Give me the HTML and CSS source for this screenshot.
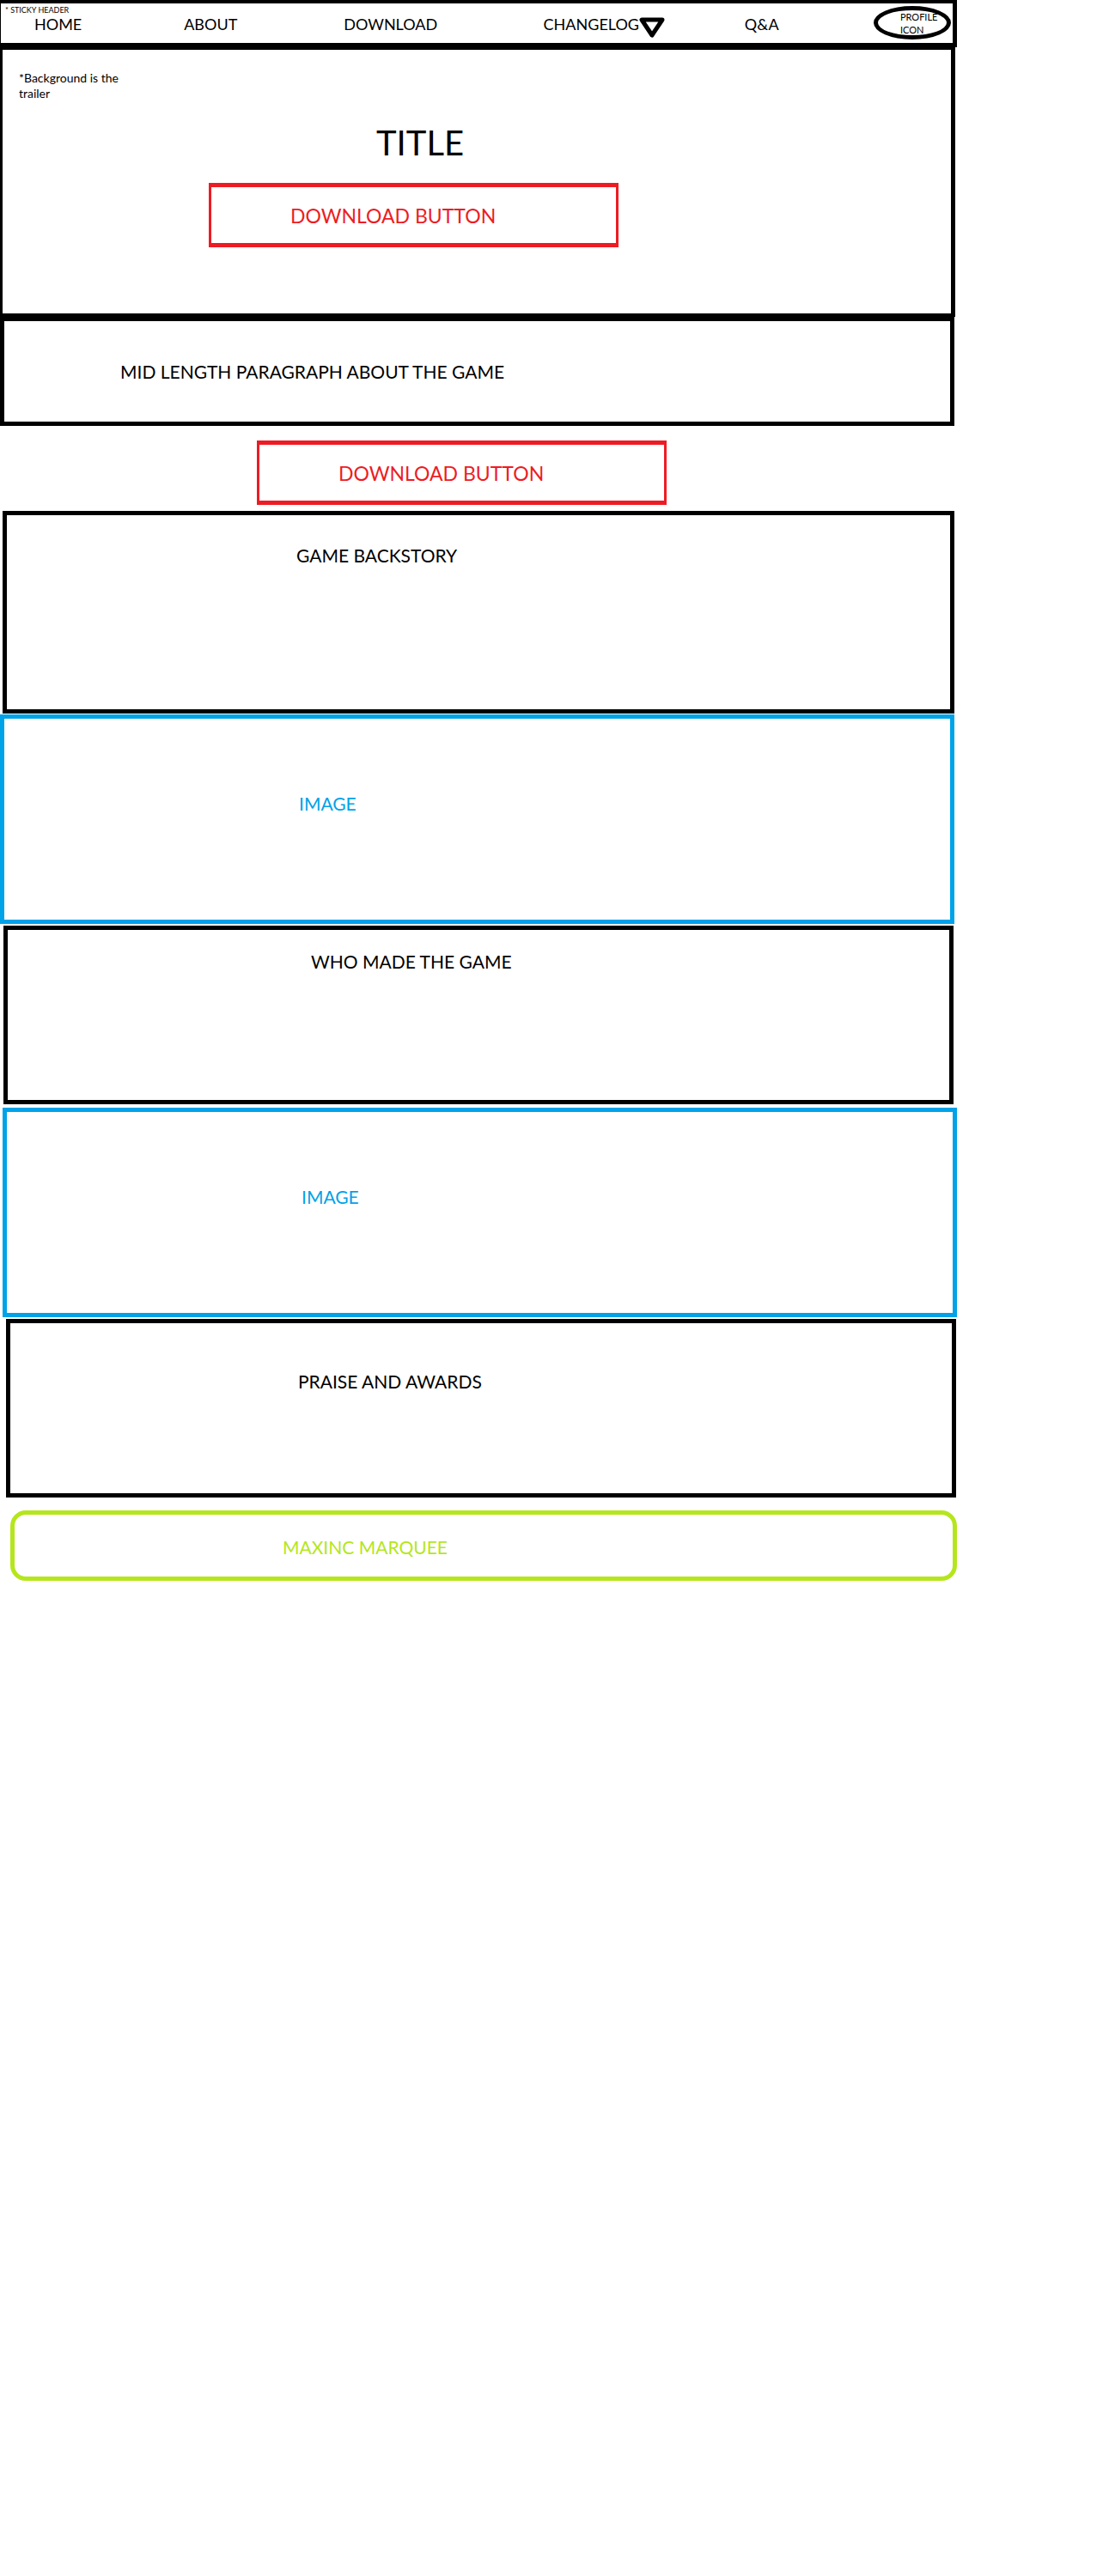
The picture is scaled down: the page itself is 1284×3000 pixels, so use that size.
FILE: index.html
```html
<!DOCTYPE html>
<html lang="en">
<head>
<meta charset="utf-8">
<meta name="viewport" content="width=device-width, initial-scale=1">
<title>Game landing page</title>
<link rel="stylesheet" href="styles.css">
</head>
<body>
<div class="page">
  <header class="header">
    <span class="header-note">* STICKY HEADER</span>
    <nav class="nav">
      <a href="#home">HOME</a>
      <a href="#about">ABOUT</a>
      <a href="#download">DOWNLOAD</a>
      <a class="has-menu" href="#changelog">CHANGELOG<svg class="caret" width="30" height="24" viewBox="0 0 30 24" aria-hidden="true"><path d="M3 3H27L15 21Z" fill="none" stroke="currentColor" stroke-width="5" stroke-linejoin="round"/></svg></a>
      <a href="#qa">Q&amp;A</a>
      <a class="profile" href="#profile">PROFILE ICON</a>
    </nav>
  </header>
  <main>
    <section class="hero" id="home">
      <p class="hero-note">*Background is the trailer</p>
      <h1 class="title">TITLE</h1>
      <button class="download" type="button">DOWNLOAD BUTTON</button>
    </section>
    <section class="box intro" id="about">
      <p class="label">MID LENGTH PARAGRAPH ABOUT THE GAME</p>
    </section>
    <div class="download-row" id="download">
      <button class="download" type="button">DOWNLOAD BUTTON</button>
    </div>
    <section class="box backstory"><h2 class="label">GAME BACKSTORY</h2></section>
    <section class="box image"><p class="label">IMAGE</p></section>
    <section class="box makers"><h2 class="label">WHO MADE THE GAME</h2></section>
    <section class="box image image-second"><p class="label">IMAGE</p></section>
    <section class="box praise"><h2 class="label">PRAISE AND AWARDS</h2></section>
  </main>
  <footer class="box marquee"><p class="label">MAXINC MARQUEE</p></footer>
</div>
</body>
</html>
```
FILE: styles.css
```css
* {
  box-sizing: border-box;
}

body {
  margin: 0;
  background: #fff;
  color: #000;
  font-family: Lato, "Liberation Sans", sans-serif;
}

h1, h2, p {
  margin: 0;
  font-weight: 400;
}

.page {
  margin-right: 170px;
}

/* Header */
.header {
  position: sticky;
  top: 0;
  z-index: 1;
  border: solid #000;
  border-width: 4px 5px 5px 1px;
  background: #fff;
}

.header-note {
  position: absolute;
  top: 2px;
  left: 5px;
  font-size: 9px;
  line-height: 12px;
}

.nav {
  display: grid;
  grid-template-columns: 174fr 186fr 232fr 234fr 150fr 90fr;
  align-items: start;
  min-height: 46px;
  padding: 3px 2px 0 39px;
}

.nav a {
  margin-top: 9px;
  color: inherit;
  font-size: 18px;
  line-height: 24px;
  text-decoration: none;
}

.nav .has-menu {
  display: flex;
}

.caret {
  flex: none;
  margin-top: 4px;
}

.nav .profile {
  height: 39px;
  margin-top: 0;
  padding: 0 8px 0 26px;
  border: 5px solid #000;
  border-radius: 50%;
  font-size: 11px;
  line-height: 15px;
}

/* Hero */
.hero {
  min-height: 314px;
  margin-right: 2px;
  padding: 24px 0 77px 19px;
  border: solid #000;
  border-width: 3px 5px 4px 3px;
}

.hero-note {
  width: 130px;
  font-size: 14px;
  line-height: 18px;
}

.title {
  margin-top: 24px;
  padding-left: 416px;
  font-size: 40px;
  line-height: 48px;
}

.download {
  display: block;
  width: 477px;
  height: 75px;
  padding: 0 0 0 92px;
  border: solid #ed1c24;
  border-width: 5px 3px;
  background: #fff;
  color: #ed1c24;
  font: inherit;
  font-size: 23px;
  line-height: 30px;
  text-align: left;
}

.hero .download {
  margin: 23px 0 0 221px;
}

.download-row {
  padding: 17px 0 7px 299px;
}

/* Framed sections */
.box {
  border: 5px solid #000;
}

.label {
  font-size: 21px;
  line-height: 24px;
}

.intro {
  min-height: 127px;
  margin-right: 3px;
  padding: 47px 0 0 135px;
}

.backstory {
  min-height: 236px;
  margin: 0 3px 1px;
  padding: 35px 0 0 337px;
}

.image {
  min-height: 244px;
  margin: 0 3px 2px 0;
  padding: 87px 0 0 343px;
  border-color: #00a2e8;
  color: #00a2e8;
}

.makers {
  min-height: 208px;
  margin: 0 4px;
  padding: 25px 0 0 353px;
}

.image-second {
  margin: 4px 0 2px 3px;
}

.praise {
  min-height: 208px;
  margin: 0 1px 15px 7px;
  padding: 56px 0 0 335px;
}

.marquee {
  min-height: 82px;
  margin-left: 12px;
  padding: 26px 0 0 312px;
  border-color: #b5e61d;
  border-radius: 18px;
  color: #b5e61d;
}
```
